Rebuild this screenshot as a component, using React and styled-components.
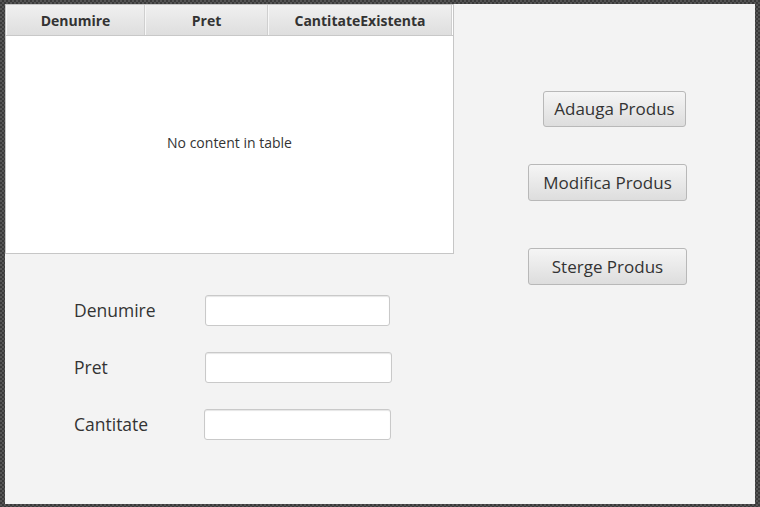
// Dependencies
import React from 'react';
import styled, { createGlobalStyle } from 'styled-components';

// Styles
const GlobalStyle = createGlobalStyle`
  html, body {
    margin: 0;
    padding: 0;
  }
  body {
    font-family: 'Open Sans', 'Noto Sans', sans-serif;
    background-color: #444;
    background-image: repeating-conic-gradient(#3a3a3a 0 25%, #555 0 50%);
    background-size: 4px 4px;
  }
`;

const Frame = styled.div`
  width: 760px;
  height: 507px;
  box-sizing: border-box;
  padding: 4px 5px 3px 5px;
`;

const Pane = styled.div`
  height: 100%;
  background: #f3f3f3;
  display: grid;
  grid-template-columns: 449px 1fr;
`;

const LeftColumn = styled.div`
  display: flex;
  flex-direction: column;
`;

const Table = styled.div`
  width: 449px;
  height: 250px;
  box-sizing: border-box;
  border: 1px solid #c6c6c6;
  background: #fff;
  display: flex;
  flex-direction: column;
`;

const HeaderRow = styled.div`
  display: flex;
  height: 30px;
  border-bottom: 1px solid #c8c8c8;
  background: #fff;
`;

const HeaderCell = styled.div`
  width: ${(props) => props.width}px;
  box-sizing: border-box;
  display: flex;
  align-items: center;
  justify-content: center;
  background: linear-gradient(#f0f0f0, #dedede);
  border-right: 1px solid #cfcfcf;
  border-left: 1px solid #f7f7f7;
  font-size: 14px;
  font-weight: 700;
  color: #333;
`;

const Empty = styled.div`
  flex: 1;
  display: flex;
  align-items: center;
  justify-content: center;
  padding-bottom: 4px;
  font-size: 14px;
  color: #333;
`;

const Form = styled.div`
  display: flex;
  flex-direction: column;
  gap: 26px;
  margin-top: 41px;
  padding-left: 69px;
`;

const Row = styled.div`
  display: grid;
  grid-template-columns: ${(props) => 131 + (props.shift || 0)}px auto;
  align-items: center;
`;

const Label = styled.span`
  font-size: 17.5px;
  color: #333;
  margin-top: -2px;
`;

const Field = styled.input`
  width: ${(props) => props.width}px;
  height: 31px;
  box-sizing: border-box;
  border: 1px solid #c9c9c9;
  border-radius: 3px;
  background: #fff;
  box-shadow: inset 0 1px 1px #e6e6e6;
  outline: none;
`;

const Buttons = styled.div`
  display: flex;
  flex-direction: column;
  align-items: flex-start;
  padding-left: 74px;
  padding-top: 87px;
`;

const Button = styled.button`
  width: ${(props) => props.width}px;
  height: ${(props) => props.height}px;
  margin-left: ${(props) => props.offset || 0}px;
  margin-top: ${(props) => props.top || 0}px;
  box-sizing: border-box;
  border: 1px solid #b8b8b8;
  border-radius: 3px;
  background: linear-gradient(#f5f5f5, #dddddd);
  font-family: inherit;
  font-size: 17px;
  color: #333;
  padding: 0 0 1px;
`;

const columns = [
  { title: 'Denumire', width: 139 },
  { title: 'Pret', width: 123 },
  { title: 'CantitateExistenta', width: 184 },
];

const fields = [
  { label: 'Denumire', width: 185 },
  { label: 'Pret', width: 187 },
  { label: 'Cantitate', width: 187, shift: -1 },
];

const App = () => {
  return (
    <>
      <GlobalStyle />
      <Frame>
        <Pane>
          <LeftColumn>
            <Table>
              <HeaderRow>
                {columns.map((col) => (
                  <HeaderCell key={col.title} width={col.width}>
                    {col.title}
                  </HeaderCell>
                ))}
              </HeaderRow>
              <Empty>No content in table</Empty>
            </Table>
            <Form>
              {fields.map((f) => (
                <Row key={f.label} shift={f.shift}>
                  <Label>{f.label}</Label>
                  <Field width={f.width} />
                </Row>
              ))}
            </Form>
          </LeftColumn>
          <Buttons>
            <Button width={143} height={36} offset={15}>Adauga Produs</Button>
            <Button width={159} height={37} top={37}>Modifica Produs</Button>
            <Button width={159} height={37} top={47}>Sterge Produs</Button>
          </Buttons>
        </Pane>
      </Frame>
    </>
  );
};

export default App;
